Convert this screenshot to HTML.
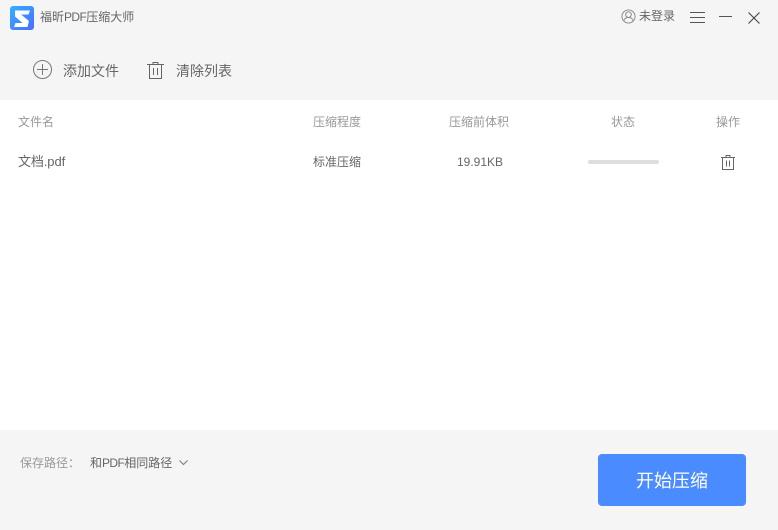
<!DOCTYPE html>
<html lang="zh-CN">
<head>
<meta charset="utf-8">
<title>福昕PDF压缩大师</title>
<style>
html,body{margin:0;padding:0}
body{width:778px;height:530px;position:relative;overflow:hidden;background:#fff;font-family:"Liberation Sans","Noto Sans CJK SC",sans-serif;font-size:12px;color:#666}
.t{position:absolute;white-space:nowrap;line-height:18px;height:18px}
.top{position:absolute;left:0;top:0;width:778px;height:100px;background:#f5f5f5}
.bot{position:absolute;left:0;top:430px;width:778px;height:100px;background:#f5f5f5}
.hd{color:#999}
.n{letter-spacing:-.6px}
svg{position:absolute;overflow:visible}
.btn{position:absolute;left:598px;top:454px;width:148px;height:52px;background:#4a8bff;border-radius:4px;color:#fff;font-size:18px;line-height:54px;text-align:center}
.bar{position:absolute;left:588px;top:160px;width:71px;height:4px;border-radius:2px;background:#dedede}
</style>
</head>
<body>
<div class="top"></div>
<div class="bot"></div>

<svg style="left:10px;top:6px" width="24" height="24" viewBox="0 0 24 24">
<defs><linearGradient id="g" x1="0" y1="0" x2="1" y2="1"><stop offset="0" stop-color="#35b0ff"/><stop offset="1" stop-color="#4a6cff"/></linearGradient></defs>
<rect width="24" height="24" rx="3" fill="url(#g)"/>
<path d="M5 4.500h15l-1.500 4h-7.500l8 6.500-1.500 6H4l1.500-4h7L5 10.500z" fill="#fff"/>
</svg>
<div class="t" style="left:40px;top:8px;color:#666">福昕<span class="n">PDF</span>压缩大师</div>

<svg style="left:621px;top:9px" width="15" height="15" viewBox="0 0 16 16" fill="none" stroke="#888" stroke-width="1">
<circle cx="8" cy="8" r="7"/><circle cx="8" cy="6" r="3"/><path d="M3 13c.5-3 2.500-4 5-4s4.500 1 5 4"/>
</svg>
<div class="t" style="left:639px;top:7px;color:#666">未登录</div>
<svg style="left:690px;top:12px" width="16" height="12" viewBox="0 0 16 12" stroke="#555" stroke-width="1" fill="none"><path d="M0 .5h15M0 5.500h15M0 10.500h15"/></svg>
<svg style="left:719px;top:16px" width="14" height="2" viewBox="0 0 14 2" stroke="#555" stroke-width="1" fill="none"><path d="M0 .5h13"/></svg>
<svg style="left:748px;top:12px" width="12" height="12" viewBox="0 0 12 12" stroke="#444" stroke-width="1.100" fill="none"><path d="M.5 .5l11 11M11.500 .5l-11 11"/></svg>

<svg style="left:33px;top:60px" width="19" height="19" viewBox="0 0 19 19" stroke="#777" stroke-width="1" fill="none"><circle cx="9.500" cy="9.500" r="9"/><path d="M4 9.500h11M9.500 4v11"/></svg>
<div class="t" style="left:63px;top:62px;font-size:14px">添加文件</div>
<svg style="left:147px;top:62px" width="18" height="17" viewBox="0 0 18 17" stroke="#666" stroke-width="1" fill="none"><path d="M0 2.500h17M6 2.500V.5h5v2M2.500 2.500v14h12v-14M6.500 6v7M10.500 6v7"/></svg>
<div class="t" style="left:176px;top:62px;font-size:14px">清除列表</div>

<div class="t hd" style="left:18px;top:113px">文件名</div>
<div class="t hd" style="left:313px;top:113px">压缩程度</div>
<div class="t hd" style="left:449px;top:113px">压缩前体积</div>
<div class="t hd" style="left:611px;top:113px">状态</div>
<div class="t hd" style="left:716px;top:113px">操作</div>

<div class="t" style="left:18px;top:153px;font-size:13px;letter-spacing:-.1px">文档.pdf</div>
<div class="t" style="left:313px;top:153px">标准压缩</div>
<div class="t" style="left:457px;top:153px">19.91KB</div>
<div class="bar"></div>
<svg style="left:721px;top:155px" width="14" height="15" viewBox="0 0 14 15" stroke="#666" stroke-width="1" fill="none"><path d="M0 2.500h14M5 2.500V.5h4v2M1.500 2.500v12h11v-12M5.500 5.500v6M8.500 5.500v6"/></svg>

<div class="t" style="left:20px;top:454px;color:#999">保存路径：</div>
<div class="t" style="left:90px;top:454px;color:#666">和<span class="n">PDF</span>相同路径</div>
<svg style="left:179px;top:460px" width="9" height="6" viewBox="0 0 9 6" stroke="#777" stroke-width="1" fill="none"><path d="M.5 .5l4 4 4-4"/></svg>

<div class="btn">开始压缩</div>
</body>
</html>
